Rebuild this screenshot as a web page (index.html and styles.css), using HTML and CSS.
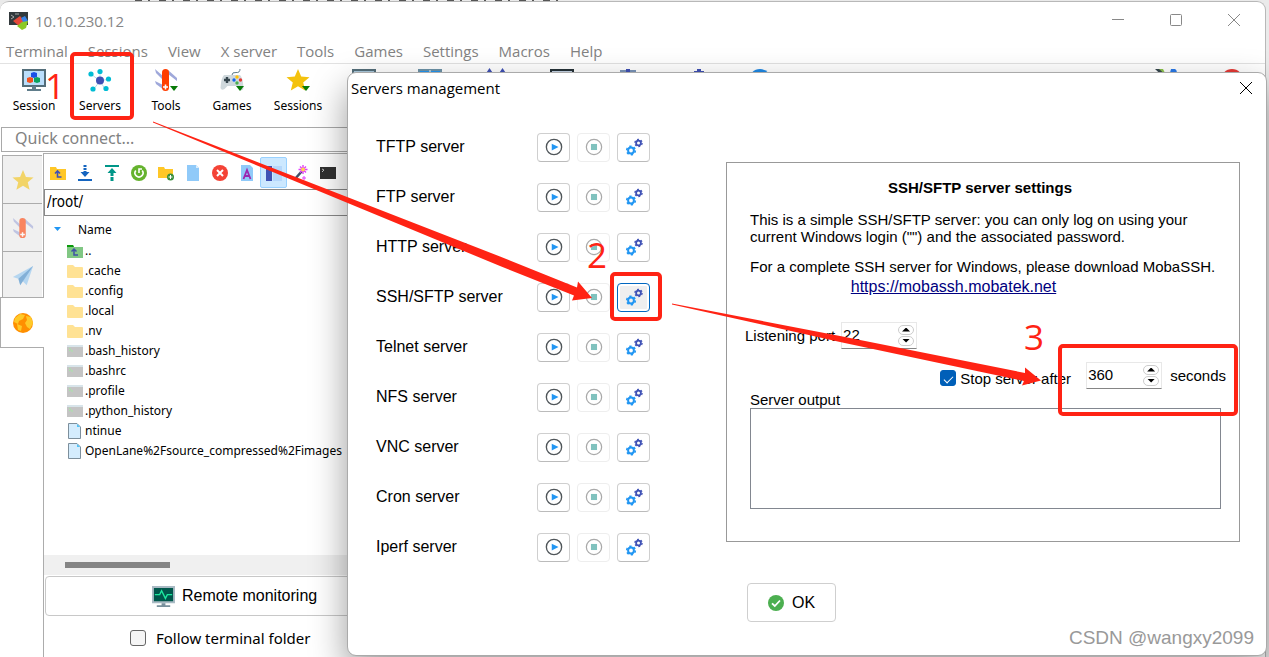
FILE: index.html
```
<!DOCTYPE html>
<html lang="en">
<head>
<meta charset="utf-8">
<title>10.10.230.12</title>
<link rel="stylesheet" href="styles.css">
<script src="rows.js" defer></script>
</head>
<body>
<svg class="defs" width="0" height="0" aria-hidden="true">
  <symbol id="knife" viewBox="0 0 24 24">
    <path d="M1 1l9 8v4L2 5zM1 13l8 4 1 5-8-6zM14 2l9 8v3l-9-7z" fill="#9fa8da"/>
    <rect x="8" y="1" width="7" height="22" rx="3.500" fill="#ff3d00"/>
    <path d="M11.500 16.500v5M9 19h5" stroke="#fff" stroke-width="1.600"/>
  </symbol>
  <symbol id="star" viewBox="0 0 24 24"><path d="M12 1l3.200 7.600 8.300.6-6.300 5.300 2 8.100L12 18.200l-7.200 4.400 2-8.100L.5 9.200l8.300-.6z" fill="#f4c20d"/></symbol>
  <symbol id="drop" viewBox="0 0 8 5"><path d="M0 0h8L4 5z" fill="#087a08"/></symbol>
  <symbol id="folder" viewBox="0 0 16 14"><path d="M0 2q0-1 1-1h5l2 2h7q1 0 1 1v9q0 1-1 1H1q-1 0-1-1z" fill="#ffe294"/></symbol>
  <symbol id="up" viewBox="0 0 16 14"><path d="M0 1h6l1 2h9v11H0z" fill="#81c784"/><path d="M0 1h6l1 2H0z" fill="#0b9a0b"/><path d="M7 5v6h4M4.500 7.500L7 5l2.500 2.500" fill="none" stroke="#3f51a5" stroke-width="1.500"/></symbol>
  <symbol id="script" viewBox="0 0 16 14"><path d="M0 1h16v12H0z" fill="#c4c4c4"/><path d="M0 1h16v2H0z" fill="#d8e4ea"/><path d="M2 4l2 1.500L2 7M4 7h2" fill="none" stroke="#a5e6a5"/></symbol>
  <symbol id="file" viewBox="0 0 16 16"><path d="M1.500.5h8.500l3.500 3.500v11.500h-12z" fill="#d4ecfd" stroke="#7d8f9c"/><path d="M10 1v3h3z" fill="#4fc3f7"/></symbol>
  <symbol id="play" viewBox="0 0 16 16"><circle cx="8" cy="8" r="6.800" fill="#fff" stroke="#50565a" stroke-width="1.200"/><path d="M6 5l6 3-6 3z" fill="#2196f3"/></symbol>
  <symbol id="stop" viewBox="0 0 16 16"><circle cx="8" cy="8" r="6.800" fill="#fff" stroke="#aaa" stroke-width="1.100"/><path d="M5.300 5.300h5.400v5.400H5.300z" fill="#80c2be"/></symbol>
  <symbol id="gears" viewBox="0 0 18 18">
    <g fill="none" stroke="#2196f3"><circle cx="6" cy="12.500" r="2.900" stroke-width="2"/><circle cx="6" cy="12.500" r="4.300" stroke-width="1.600" stroke-dasharray="2.250 2.250"/></g>
    <g fill="none" stroke="#3f51b5"><circle cx="13.500" cy="5" r="2.400" stroke-width="1.800"/><circle cx="13.500" cy="5" r="3.600" stroke-width="1.300" stroke-dasharray="1.885 1.885"/></g>
  </symbol>
</svg>

<div class="backdrop-text" aria-hidden="true"></div>
<main class="window">
  <header class="titlebar">
    <svg class="logo" viewBox="0 0 20 20"><path d="M0 1h19v13H0z" fill="#333a3d"/><path d="M2 4l3 2-3 2M6 3h4" fill="none" stroke="#aaa"/><path d="M4 10l7-5 4 5-5 5z" fill="#e5493a"/><path d="M12 7l4-2 3 5-4 3z" fill="#3684e8"/><path d="M8 15l5-4 6-1-2 7-4 2z" fill="#8bc926"/></svg>
    <h1>10.10.230.12</h1>
    <div class="controls">
      <button aria-label="Minimize"><svg viewBox="0 0 12 12"><path d="M0 5.500h12"/></svg></button>
      <button aria-label="Maximize"><svg viewBox="0 0 12 12"><rect x=".5" y=".5" width="11" height="11" rx="1"/></svg></button>
      <button aria-label="Close"><svg viewBox="0 0 12 12"><path d="M0 0l12 12M12 0L0 12"/></svg></button>
    </div>
  </header>
  <nav class="menu">
    <a href="#">Terminal</a><a href="#">Sessions</a><a href="#">View</a><a href="#">X server</a><a href="#">Tools</a><a href="#">Games</a><a href="#">Settings</a><a href="#">Macros</a><a href="#">Help</a>
  </nav>
  <div class="toolbar">
    <button><svg viewBox="0 0 24 24"><path d="M1 2h22v16H1z" fill="#bbdefb" stroke="#546e7a" stroke-width="2"/><path d="M10 18h4v3h-4zM5 21h14v2H5z" fill="#607d8b"/><path d="M9 5l3-1 3 1v4l-3 1-3-1z" fill="#1a4fe8"/><path d="M5 10l3-1 3 1v4l-3 1-3-1z" fill="#f4511e"/><path d="M12 10l3-1 3 1v4l-3 1-3-1z" fill="#0ba360"/></svg>Session</button>
    <button><svg viewBox="0 0 24 24"><path d="M12 13L3 6M12 13V3M12 13l9-2M12 13l5 8M12 13l-7 9" stroke="#b2dfe8"/><g fill="#00bcd4"><circle cx="3" cy="6" r="2.600"/><circle cx="12" cy="3.500" r="2.600"/><circle cx="20.500" cy="11" r="2.600"/><circle cx="18" cy="20.500" r="2.600"/><circle cx="5" cy="21" r="2.600"/></g><circle cx="12" cy="12.500" r="4" fill="#3f51b5"/></svg>Servers</button>
    <button><svg viewBox="0 0 24 24"><use href="#knife"/><use href="#drop" x="16" y="18" width="8" height="5"/></svg>Tools</button>
    <button><svg viewBox="0 0 24 24"><path d="M12 7q0-3 4-2.500T20 1" fill="none" stroke="#607d8b"/><path d="M4 7h16q3 3 3.500 13-1 4-4 1l-3-3h-9l-3 3q-3 2-4-1Q1 10 4 7z" fill="#cfd8dc"/><path d="M7 9v6M4 12h6" stroke="#37474f" stroke-width="2.400"/><circle cx="17" cy="9" r="1.700" fill="#ffc107"/><circle cx="14" cy="12" r="1.700" fill="#1565e8"/><circle cx="20.500" cy="12" r="1.700" fill="#e53935"/><circle cx="17" cy="15" r="1.700" fill="#4caf50"/><use href="#drop" x="16" y="18" width="8" height="5"/></svg>Games</button>
    <button><svg viewBox="0 0 24 24"><use href="#star"/><use href="#drop" x="16" y="18" width="8" height="5"/></svg>Sessions</button>
    <button aria-label="View"><svg viewBox="0 0 24 24"><path d="M1 2h22v16H1z" fill="#a9c8dc" stroke="#546e7a" stroke-width="2"/><circle cx="12" cy="7" r="3" fill="#455a64"/></svg></button>
    <button aria-label="Split"><svg viewBox="0 0 24 24"><path d="M1 2h22v16H1z" fill="#2196f3" stroke="#6d93a8" stroke-width="2"/><path d="M12 2v16" stroke="#a9c8dc" stroke-width="2"/></svg></button>
    <button aria-label="MultiExec"><svg viewBox="0 0 24 24"><path d="M5.500 0l4 6h-8zM18.500 0l4 6h-8z" fill="#3f51b5"/></svg></button>
    <button aria-label="Tunneling"><svg viewBox="0 0 24 24"><path d="M1 2h22v16H1z" fill="#c5d4e6" stroke="#263238" stroke-width="2"/></svg></button>
    <button aria-label="Packages"><svg viewBox="0 0 24 24"><path d="M4 2h16v6H4z" fill="#7a94b8"/><path d="M10 1h4v8h-4z" fill="#3f51b5"/></svg></button>
    <button aria-label="Settings"><svg viewBox="0 0 24 24"><path d="M15 1h4v2h3v4H12V3h3z" fill="#3f51b5"/></svg></button>
    <button aria-label="Help"><svg viewBox="0 0 24 24"><circle cx="12" cy="12" r="11" fill="#1e88e5"/></svg></button>
    <span class="grow"></span>
    <button aria-label="X server"><svg viewBox="0 0 24 24"><path d="M1 1h6l9 14z" fill="#37474f"/><path d="M5 1h4l3 6z" fill="#8bc34a"/><path d="M17 1h4q3 2 1 5l-8 6z" fill="#2979e8"/></svg></button>
    <button aria-label="Exit"><svg viewBox="0 0 24 24"><circle cx="12" cy="12" r="11" fill="#e53935"/></svg></button>
  </div>
  <input class="quick" aria-label="Quick connect" placeholder="Quick connect...">
  <div class="workspace">
    <div class="tabs">
      <button aria-label="Favourites"><svg viewBox="0 0 24 24"><use href="#star"/></svg></button>
      <button aria-label="Tools"><svg viewBox="0 0 24 24"><use href="#knife"/></svg></button>
      <button aria-label="Macros"><svg viewBox="0 0 24 24"><path d="M1 13L23 1l-7 21-5-5-2 5-2-7z" fill="#8ec5f0"/><path d="M7 15L23 1 9 22z" fill="#3b86c8"/></svg></button>
      <button class="active" aria-label="Sftp"><svg viewBox="0 0 24 24"><circle cx="12" cy="12" r="10" fill="#ff8f00"/><path d="M4 7l5-4 5 1-2 4-4 2-1 3-4-2zM15 5l5 1 2 6-3 6-3-2-2-4 2-3zM6 13l5 2-1 5-3-1z" fill="#ffc928"/></svg></button>
    </div>
    <section class="panel">
      <div class="filebar">
        <button aria-label="Parent folder"><svg viewBox="0 0 16 16"><path d="M0 2h6l1 2h9v11H0z" fill="#ffc727"/><path d="M7.500 6v6h4M5 8.500L7.500 6 10 8.500" fill="none" stroke="#3f51b5" stroke-width="1.600"/></svg></button>
        <button aria-label="Download"><svg viewBox="0 0 16 16"><path d="M8 0v9" stroke="#1565c0" stroke-width="3" stroke-dasharray="2 1"/><path d="M3.500 7h9L8 12zM1 14h14v2H1z" fill="#1565c0"/></svg></button>
        <button aria-label="Upload"><svg viewBox="0 0 16 16"><path d="M8 7v9" stroke="#009688" stroke-width="3" stroke-dasharray="4 1"/><path d="M3.500 8h9L8 3zM1 0h14v2H1z" fill="#009688"/></svg></button>
        <button aria-label="Refresh"><svg viewBox="0 0 16 16"><circle cx="8" cy="8" r="8" fill="#65b32e"/><path d="M4.800 5.500a4 4 0 1 0 6.400 0M8 8V4h3" fill="none" stroke="#fff" stroke-width="1.600"/></svg></button>
        <button aria-label="New folder"><svg viewBox="0 0 16 16"><path d="M0 2h6l1 2h8v9H0z" fill="#ffc727"/><circle cx="12.500" cy="12" r="3.500" fill="#388e3c"/><path d="M12.500 10v4M10.500 12h4" stroke="#fff"/></svg></button>
        <button aria-label="New file"><svg viewBox="0 0 16 16"><path d="M2 0h9l3 3v13H2z" fill="#90caf9"/><path d="M11 0v3h3z" fill="#dceefc"/></svg></button>
        <button aria-label="Delete"><svg viewBox="0 0 16 16"><circle cx="8" cy="8" r="8" fill="#f44336"/><path d="M5 5l6 6M11 5l-6 6" stroke="#fff" stroke-width="2"/></svg></button>
        <button aria-label="Rename"><svg viewBox="0 0 16 16"><path d="M2 0h9l3 3v13H2z" fill="#90caf9"/><path d="M4.500 14L8 5l3.500 9M6 11h4" fill="none" stroke="#9c27b0" stroke-width="1.800"/></svg></button>
        <button class="on" aria-label="Split view"><svg viewBox="0 0 16 16"><path d="M0 1h6v15H0z" fill="#3f51b5"/><path d="M7 1h9v15H7z" fill="#b5d7fb"/></svg></button>
        <button aria-label="Permissions"><svg viewBox="0 0 16 16"><path d="M2 14l7-8" stroke="#42526b" stroke-width="2.500"/><path d="M10 0v9M5.500 4.500h9M7 1.500l6 6M13 1.500l-6 6" stroke="#e040fb" stroke-width="1.400"/><circle cx="10" cy="4.500" r="2" fill="#ffd54f"/><path d="M11 11v4M9 13h4" stroke="#e040fb"/></svg></button>
        <button aria-label="Terminal"><svg viewBox="0 0 16 16"><path d="M0 2h16v12H0z" fill="#303030"/><path d="M2 4l2 1-2 2" fill="none" stroke="#bbb"/></svg></button>
      </div>
      <input class="path" aria-label="Path" value="/root/">
      <div class="files">
        <div class="head"><svg viewBox="0 0 8 5"><path d="M0 0h7L3.500 4z" fill="#2196f3"/></svg>Name</div>
        <ul id="files"></ul>
      </div>
      <div class="scroll"><span></span></div>
      <button class="monitor"><svg viewBox="0 0 24 24"><path d="M1 2h22v16H1z" fill="#00574b" stroke="#a9bac4" stroke-width="2"/><path d="M3 10h5l2-4 4 8 2-4h5" fill="none" stroke="#1de9a0" stroke-width="1.400"/><path d="M10 19h4v2h5v2H5v-2h5z" fill="#78909c"/></svg>Remote monitoring</button>
      <label class="follow"><input type="checkbox">Follow terminal folder</label>
    </section>
  </div>
</main>

<section class="dialog" role="dialog" aria-labelledby="dlg">
  <header><h2 id="dlg">Servers management</h2><button aria-label="Close"><svg viewBox="0 0 12 12"><path d="M0 0l12 12M12 0L0 12"/></svg></button></header>
  <div class="body">
    <div class="servers" id="servers"></div>
    <div class="right">
      <div class="settings">
        <h3>SSH/SFTP server settings</h3>
        <p>This is a simple SSH/SFTP server: you can only log on using your<br>current Windows login ("") and the associated password.</p>
        <p class="moba">For a complete SSH server for Windows, please download MobaSSH.</p>
        <a href="https://mobassh.mobatek.net">https://mobassh.mobatek.net</a>
        <div class="port"><label for="port">Listening port</label><div class="spin"><input id="port" value="22"><button aria-label="Port up"></button><button class="down" aria-label="Port down"></button></div></div>
        <div class="after"><label class="check"><input type="checkbox" checked>Stop server after</label><div class="spin"><input id="secs" value="360"><button aria-label="Seconds up"></button><button class="down" aria-label="Seconds down"></button></div><label for="secs">seconds</label></div>
        <label class="outlabel" for="out">Server output</label>
        <textarea id="out"></textarea>
      </div>
      <button class="ok"><svg viewBox="0 0 16 16"><circle cx="8" cy="8" r="8" fill="#4caf50"/><path d="M4 8.300l2.800 2.700L12 5.500" fill="none" stroke="#fff" stroke-width="1.800"/></svg>OK</button>
    </div>
  </div>
</section>

<svg class="marks" viewBox="0 0 1269 657" width="1269" height="657" aria-hidden="true">
  <g fill="none" stroke="#ff2314" stroke-width="4"><rect x="72" y="54" width="60" height="64" rx="3"/><rect x="612" y="274" width="48" height="45" rx="3"/><rect x="1060" y="346" width="176" height="68" rx="3"/></g>
  <g fill="#ff2314"><path d="M153 121.500L500 256.500 577 287.500 578 281.500 592 298 572 300.500 574 295.500 500 266 153 122.500z"/><path d="M672 303.500L840 336 1025 373 1025 367.500 1041 380.500 1022 385.500 1024 381 840 342 672 304.500z"/>
  <text x="45" y="99">1</text><text x="587" y="268">2</text><text x="1024" y="350">3</text></g>
</svg>
<div class="watermark">CSDN @wangxy2099</div>
</body>
</html>
```
FILE: rows.js
```
const icon = (id) => `<svg aria-hidden="true"><use href="#${id}"/></svg>`;

const files = [
  ['up', '..'], ['folder', '.cache'], ['folder', '.config'], ['folder', '.local'], ['folder', '.nv'],
  ['script', '.bash_history'], ['script', '.bashrc'], ['script', '.profile'], ['script', '.python_history'],
  ['file', 'ntinue'], ['file', 'OpenLane%2Fsource_compressed%2Fimages'],
];
document.getElementById('files').innerHTML = files
  .map(([kind, name]) => `<li>${icon(kind)}${name}</li>`).join('');

const servers = ['TFTP', 'FTP', 'HTTP', 'SSH/SFTP', 'Telnet', 'NFS', 'VNC', 'Cron', 'Iperf'];
document.getElementById('servers').innerHTML = servers
  .map((name) => `<div class="server"><span>${name} server</span>
    <button aria-label="Start ${name}">${icon('play')}</button>
    <button aria-label="Stop ${name}" disabled>${icon('stop')}</button>
    <button aria-label="Configure ${name}"${name === 'SSH/SFTP' ? ' class="focus"' : ''}>${icon('gears')}</button></div>`)
  .join('');
```
FILE: styles.css
```
* { box-sizing: border-box; }
html, body { height: 100%; }
body {
  margin: 0;
  display: flex;
  flex-direction: column;
  overflow: hidden;
  position: relative;
  background: #eaeaea;
  color: #000;
  font-family: "Liberation Sans", Arial, sans-serif;
  font-size: 15px;
}
h1, h2, h3, p, ul { margin: 0; padding: 0; font-weight: normal; }
button, input, textarea { font: inherit; color: inherit; margin: 0; }
button { background: none; border: 0; padding: 0; }
svg { flex: none; }
.defs { position: absolute; }

.backdrop-text {
  height: 1px;
  margin-left: 135px;
  width: 425px;
  background: repeating-linear-gradient(90deg, #555 0 7px, #eaeaea 7px 13px, #555 13px 15px, #eaeaea 15px 24px);
}
.window {
  flex: 1;
  min-height: 0;
  display: flex;
  flex-direction: column;
  margin-right: 3px;
  background: #fff;
  border: 1px solid #b8b8b8;
  border-bottom: 0;
  border-left: 0;
  border-radius: 9px 9px 0 0;
}
.titlebar {
  display: flex;
  align-items: center;
  height: 37px;
  padding-left: 9px;
  gap: 6px;
  color: #868686;
}
.logo { width: 20px; height: 20px; }
.titlebar h1 { font: 15px/20px "Open Sans", sans-serif; }
.controls { margin: 0 2px 0 auto; display: flex; }
.controls button { width: 58px; height: 32px; }
.controls svg, .dialog header svg { width: 12px; height: 12px; fill: none; stroke: #888; }
.menu {
  display: flex;
  align-items: center;
  gap: 20px;
  height: 25px;
  padding-left: 6px;
  border-bottom: 1px solid #e2e2e2;
  font: 15px "Open Sans", sans-serif;
}
.menu a { color: #828282; text-decoration: none; }
.toolbar {
  display: flex;
  height: 62px;
  padding: 4px 0 0 1px;
  font: 12px "Noto Sans", sans-serif;
}
.toolbar button {
  width: 66px;
  display: flex;
  flex-direction: column;
  align-items: center;
  gap: 5px;
}
.toolbar svg { width: 24px; height: 24px; }
.grow { flex: 1; }
.quick {
  height: 25px;
  margin: 1px 0 0 1px;
  padding: 0 13px 3px;
  border: 1px solid #a9a9a9;
  background: #fff;
  font: 16px "Noto Sans", sans-serif;
}
.quick::placeholder { color: #828282; opacity: 1; }
.workspace { flex: 1; min-height: 0; display: flex; margin-top: 1px; }
.tabs { width: 43px; padding-top: 2px; margin-right: -1px; }
.tabs button {
  display: grid;
  place-items: center;
  width: 40px;
  height: 48px;
  margin-left: 2px;
  border: 1px solid #acacac;
  border-bottom: 0;
  border-right: 0;
  background: #f0f0f0;
}
.tabs svg { width: 22px; height: 22px; opacity: .6; }
.tabs .active { width: 44px; height: 51px; margin: -2px 0 0; border-bottom: 1px solid #acacac; background: #fff; position: relative; }
.tabs .active svg { opacity: 1; width: 24px; height: 24px; }
.panel {
  flex: 1;
  min-width: 0;
  display: flex;
  flex-direction: column;
  margin-left: 1px;
  border: 1px solid #acacac;
  border-width: 1px 0 0 1px;
}
.filebar { display: flex; height: 35px; padding: 3px 0 1px; }
.filebar button { width: 27px; display: grid; place-items: center; border: 1px solid transparent; border-radius: 2px; }
.filebar .on { background: #cce8ff; border-color: #99d1ff; }
.filebar svg { width: 16px; height: 16px; }
.path {
  height: 27px;
  padding: 0 2px 1px;
  border: 1px solid #8a8a8a;
  background: #fff;
  font: 15px "DejaVu Sans Condensed", sans-serif;
}
.files { flex: 1; min-height: 0; padding-top: 2px; font: 12px/20px "Noto Sans", sans-serif; }
.files .head { display: flex; align-items: center; gap: 16px; padding-left: 10px; height: 23px; }
.head svg { width: 8px; height: 5px; }
.files ul { list-style: none; }
.files li { display: flex; align-items: center; gap: 2px; height: 20px; padding-left: 23px; white-space: nowrap; }
.files li svg { width: 16px; height: 16px; }
.scroll { height: 20px; padding: 7px 0 0 21px; background: #f0f0f0; }
.scroll span { display: block; width: 105px; height: 6px; background: #858585; }
.monitor {
  display: flex;
  align-items: center;
  gap: 7px;
  height: 40px;
  margin: 1px 0 0 1px;
  padding-left: 106px;
  border: 1px solid #c8c8c8;
  border-radius: 4px;
  font-size: 16px;
}
.monitor svg { width: 23px; height: 23px; }
.follow { display: flex; align-items: center; gap: 10px; height: 41px; padding: 3px 0 0 86px; font: 15px "Noto Sans", sans-serif; }
.follow input, .check input { appearance: none; width: 16px; height: 16px; margin: 0; border: 1px solid #666; border-radius: 3px; background: #f5f5f5; }

.dialog {
  position: absolute;
  inset: 72px 2px 1px 347px;
  display: flex;
  flex-direction: column;
  border: 1px solid #aaa;
  border-radius: 9px;
  background: #fff;
  box-shadow: 0 16px 36px rgba(0, 0, 0, .4);
}
.dialog header { display: flex; align-items: center; height: 30px; padding: 0 14px 0 3px; }
.dialog h2 { flex: 1; font: 15px "Open Sans", sans-serif; }
.dialog header svg { stroke: #000; display: block; }
.body { flex: 1; display: flex; padding: 19px 26px 0 28px; }
.server { display: flex; align-items: center; gap: 7px; height: 50px; font-size: 16px; }
.server span { width: 154px; }
.server button {
  display: grid;
  place-items: center;
  width: 33px;
  height: 29px;
  border: 1px solid #cfcfcf;
  border-bottom-color: #bbb;
  border-radius: 4px;
}
.server button:disabled { border-color: #eee; }
.server svg { width: 18px; height: 18px; }
.server .focus { border-color: #0067c0; background: #efefef; box-shadow: inset 0 0 0 2px #fff; }
.right { flex: 1; margin: 40px 0 0 76px; }
.settings { height: 380px; padding: 16px 18px 0; border: 1px solid #999; display: flex; flex-direction: column; }
.settings h3 { font-size: 15px; font-weight: bold; text-align: center; line-height: 17px; padding-right: 6px; }
.settings p { line-height: 17px; margin: 15px 0 0 5px; white-space: nowrap; }
.settings .moba { margin-top: 13px; }
.settings a { align-self: center; margin-right: 59px; font-size: 16px; line-height: 24px; color: #000080; }
.port { display: flex; align-items: center; gap: 6px; margin-top: 23px; }
.after { display: flex; align-items: center; justify-content: flex-end; gap: 8px; margin: 13px -5px 0 0; }
.after .check { margin-right: 7px; padding-top: 5px; display: flex; align-items: center; gap: 4px; }
.check input:checked { border-color: #005fb8; background: #005fb8; display: grid; place-items: center; }
.check input:checked::before { content: ""; width: 8px; height: 4px; border: solid #fff; border-width: 0 0 1px 1px; transform: rotate(-45deg); }
.spin {
  display: grid;
  grid-template-columns: 1fr 16px;
  grid-template-rows: 11px 11px;
  align-content: center;
  column-gap: 2px;
  width: 76px;
  height: 27px;
  padding-right: 2px;
  border: 1px solid #e8e8e8;
  border-bottom-color: #858585;
}
.spin input { grid-row: 1 / 3; width: 100%; min-width: 0; padding: 0 1px 3px; border: 0; background: none; }
.spin button { display: grid; place-items: center; height: 10px; border: 1px solid #ccc; border-radius: 5px; }
.spin button::before { content: ""; width: 8px; height: 4px; background: #000; clip-path: polygon(50% 0, 100% 100%, 0 100%); }
.spin .down::before { clip-path: polygon(0 0, 100% 0, 50% 100%); }
.outlabel { margin: 3px 0 0 5px; line-height: 16px; }
.settings textarea { height: 101px; margin: 0 0 0 5px; resize: none; border: 1px solid #828790; background: #fff; }
.ok { display: flex; align-items: center; justify-content: center; gap: 8px; width: 89px; height: 39px; margin: 41px 0 0 21px; border: 1px solid #cfcfcf; border-radius: 4px; font-size: 16px; }
.ok svg { width: 16px; height: 16px; }

.marks { position: absolute; top: 0; left: 0; pointer-events: none; }
.marks text { font: 35px "Open Sans", sans-serif; }
.watermark { position: absolute; right: 15px; bottom: 8px; font: 19px "Liberation Sans", sans-serif; color: #999; }
```
